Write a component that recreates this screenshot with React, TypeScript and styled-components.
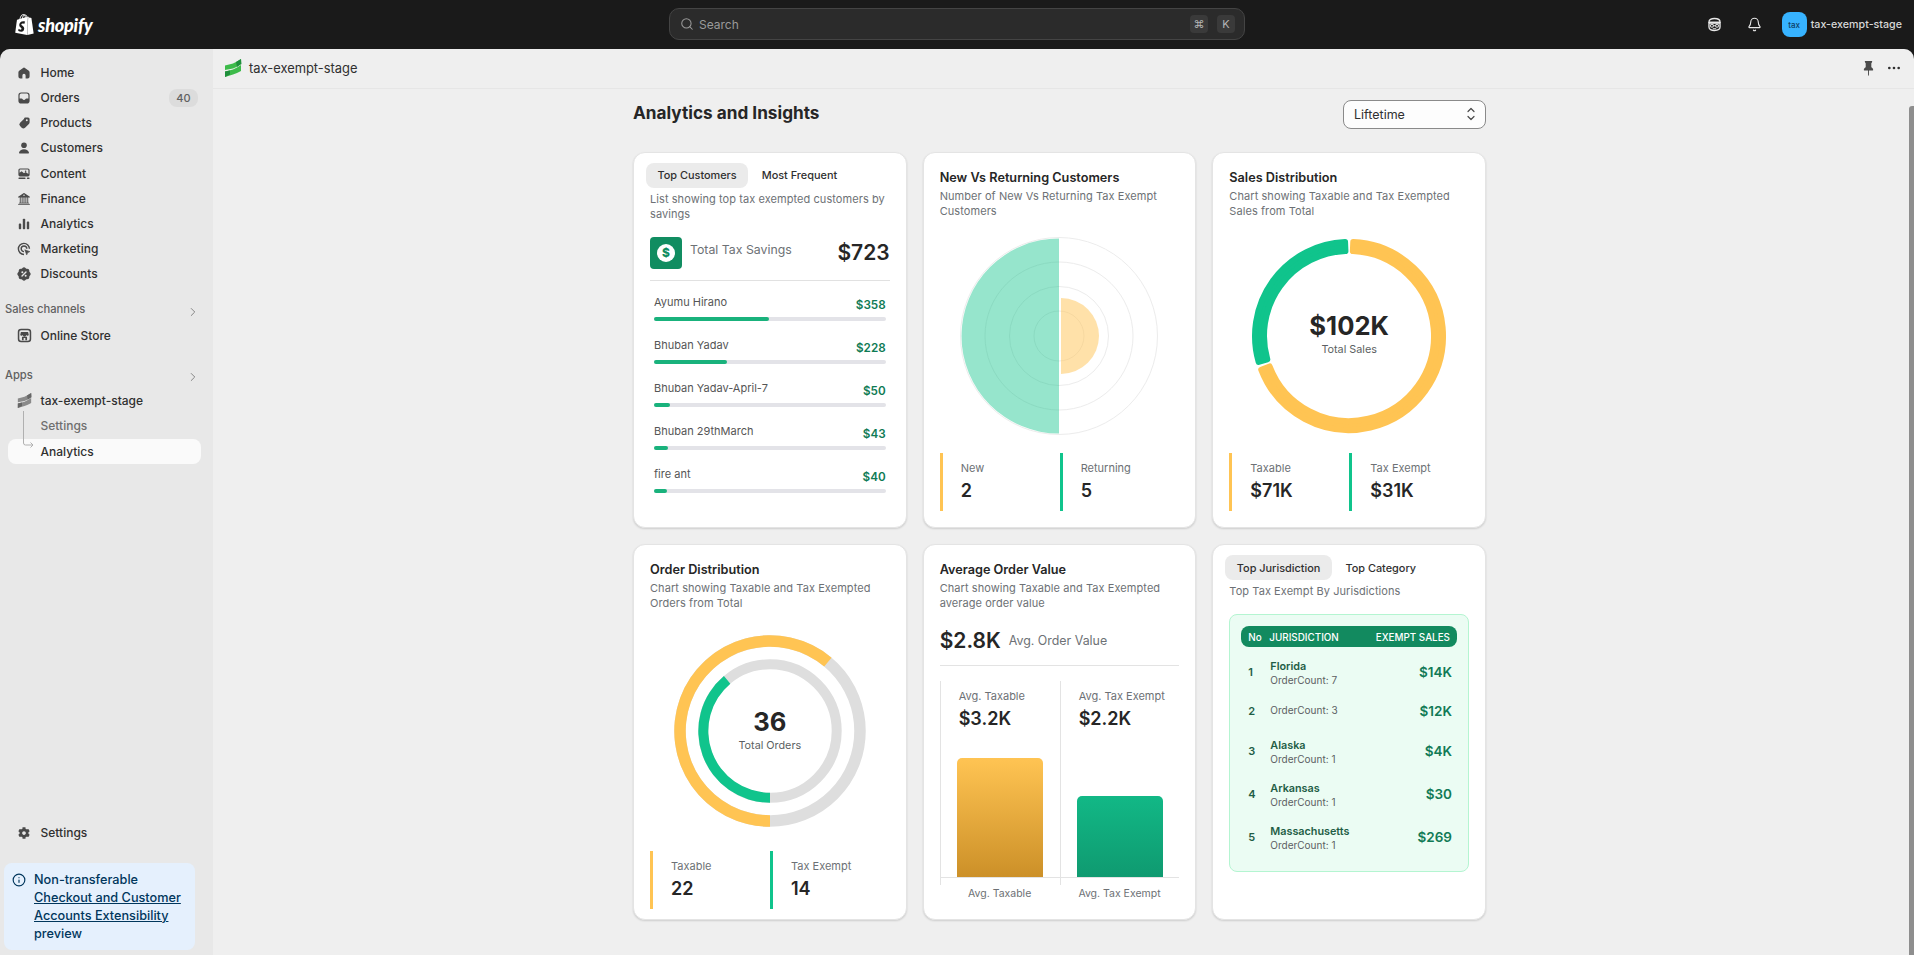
// App.tsx
import React from 'react';
import styled, { createGlobalStyle } from 'styled-components';
import { SiShopify } from 'react-icons/si';
import { FaCog } from 'react-icons/fa';
import { BsBank2, BsPinFill } from 'react-icons/bs';
import { TbRosetteDiscountFilled } from 'react-icons/tb';
import { Bell, ChevronRight, Ellipsis, Info, Search } from 'lucide-react';

const ORANGE = '#ffc453';
const GREEN = '#10c48c';

const polar = (cx: number, cy: number, r: number, deg: number) => {
  const rad = ((deg - 90) * Math.PI) / 180;
  return [cx + r * Math.cos(rad), cy + r * Math.sin(rad)].map(n => n.toFixed(2)).join(' ');
};

// annular sector, angles run clockwise from 12 o'clock
const sector = (cx: number, cy: number, inner: number, outer: number, a0: number, a1: number) => {
  const large = a1 - a0 > 180 ? 1 : 0;
  if (inner === 0) {
    return `M${polar(cx, cy, outer, a0)}A${outer} ${outer} 0 ${large} 1 ${polar(cx, cy, outer, a1)}Z`;
  }
  return `M${polar(cx, cy, outer, a0)}A${outer} ${outer} 0 ${large} 1 ${polar(cx, cy, outer, a1)}L${polar(cx, cy, inner, a1)}A${inner} ${inner} 0 ${large} 0 ${polar(cx, cy, inner, a0)}Z`;
};

const GlobalStyle = createGlobalStyle`
  html, body {
    margin: 0;
    height: 100%;
    overflow: hidden;
    background: #1a1a1a;
    font-family: Inter, "Liberation Sans", sans-serif;
  }
  * { box-sizing: border-box; }
`;

const Page = styled.div`
  width: 1914px;
  height: 955px;
  display: flex;
  flex-direction: column;
  background: #1a1a1a;
`;

const TopBar = styled.header`
  height: 49px;
  flex: none;
  position: relative;
  display: flex;
  align-items: center;
  justify-content: space-between;
  padding: 0 12px 0 14px;
  color: #e3e3e3;
`;

const Logo = styled.div`
  display: flex;
  align-items: center;
  gap: 3px;
  width: 398px;
  color: #fff;
`;

const LogoWord = styled.span`
  font-family: Lato, sans-serif;
  font-style: italic;
  font-weight: 900;
  font-size: 18px;
  letter-spacing: -0.2px;
`;

const SearchBox = styled.div`
  width: 576px;
  height: 32px;
  margin-top: -1px;
  display: flex;
  align-items: center;
  gap: 5px;
  padding: 0 9px 0 10px;
  background: #2b2b2b;
  border: 1px solid #444;
  border-radius: 10px;
  color: #9a9a9a;
  font-size: 12px;
`;

const SearchText = styled.span`
  flex: 1;
`;

const Kbd = styled.span`
  width: 18px;
  height: 18px;
  margin-left: 4px;
  display: flex;
  align-items: center;
  justify-content: center;
  background: #3a3a3a;
  border-radius: 4px;
  font-size: 11px;
  color: #b5b5b5;
`;

const TopRight = styled.div`
  width: 400px;
  display: flex;
  align-items: center;
  justify-content: flex-end;
`;

const TopIcon = styled.span`
  width: 20px;
  height: 20px;
  margin-right: 20px;
  display: flex;
  align-items: center;
  justify-content: center;
`;

const Avatar = styled.span`
  width: 25px;
  height: 25px;
  margin-left: -3px;
  border-radius: 8px;
  background: #37b3ff;
  color: #0b3d66;
  font-size: 8px;
  font-weight: 500;
  display: flex;
  align-items: center;
  justify-content: center;
`;

const ShopName = styled.span`
  margin-left: 4px;
  font-size: 10.7px;
  font-weight: 450;
  color: #d8d8d8;
`;

const Body = styled.div`
  flex: 1;
  display: flex;
  min-height: 0;
  border-radius: 10px 10px 0 0;
  overflow: hidden;
  box-shadow: inset 0 1px 0 rgba(255, 255, 255, 0.4);
`;

const Sidebar = styled.nav`
  width: 213px;
  flex: none;
  display: flex;
  flex-direction: column;
  padding: 11px 0 5px;
  background: #e8e8e8;
`;

const NavRow = styled.div<{ $active?: boolean; $muted?: boolean; $strong?: boolean; $top?: number }>`
  position: relative;
  height: 25px;
  flex: none;
  margin: ${p => p.$top ?? 0}px 12px 0 8px;
  padding: 0 3px 0 6px;
  display: flex;
  align-items: center;
  gap: 6.5px;
  border-radius: 8px;
  font-size: 12px;
  font-weight: ${p => (p.$active || p.$strong ? 550 : 500)};
  color: ${p => (p.$muted ? '#6f6f6f' : '#303030')};
  background: ${p => (p.$active ? '#fafafa' : 'transparent')};
`;

const NavIcon = styled.span`
  width: 20px;
  height: 20px;
  flex: none;
  display: flex;
  align-items: center;
  justify-content: center;
  color: #4a4a4a;
`;

const NavLabel = styled.span`
  flex: 1;
`;

const NavBadge = styled.span`
  width: 29px;
  height: 18px;
  display: flex;
  align-items: center;
  justify-content: center;
  border-radius: 8px;
  background: #dcdcdc;
  color: #616161;
  font-size: 11px;
`;

const SectionHead = styled.div<{ $top: number }>`
  height: 25px;
  flex: none;
  margin-top: ${p => p.$top}px;
  padding: 0 13px 0 5px;
  display: flex;
  align-items: center;
  justify-content: space-between;
  font-size: 11.2px;
  font-weight: 500;
  color: #616161;
`;

const SectionChevron = styled(ChevronRight)`
  margin-top: 5px;
  color: #777;
`;

const TreeLine = styled.svg`
  position: absolute;
  left: 14px;
  top: -28px;
  width: 14px;
  height: 42px;
`;

const Spacer = styled.div`
  flex: 1;
`;

const Banner = styled.div`
  margin: 18px 18px 0 4px;
  height: 87px;
  padding: 7.5px 6px 7.5px 8px;
  display: flex;
  gap: 8px;
  border-radius: 8px;
  background: #e5f0fd;
  color: #00365c;
  font-size: 12.7px;
  font-weight: 500;
  line-height: 18px;
`;

const BannerLink = styled.span`
  text-decoration: underline;
`;

const BannerIcon = styled.span`
  flex: none;
  height: 18px;
  width: 14px;
  display: flex;
  align-items: center;
`;

const Main = styled.main`
  flex: 1;
  position: relative;
  display: flex;
  flex-direction: column;
  background: #efefef;
`;

const AppBar = styled.div`
  height: 40px;
  flex: none;
  display: flex;
  align-items: center;
  gap: 8px;
  padding: 0 12px 1px 11px;
  border-bottom: 1px solid #e6e6e6;
  font-size: 12.9px;
  color: #303030;
`;

const AppBarTitle = styled.span`
  flex: 1;
  margin-left: -1px;
`;

const PinSlot = styled.span`
  width: 20px;
  height: 20px;
  display: flex;
  align-items: center;
  justify-content: center;
`;

const ScrollThumb = styled.div`
  position: absolute;
  right: 0;
  top: 57px;
  bottom: 0;
  width: 5px;
  border-radius: 3px 0 0 0;
  background: #8e8e8e;
`;

const Content = styled.div`
  width: 853px;
  margin-left: 420px;
  padding-top: 10px;
`;

const PageHead = styled.div`
  height: 30px;
  display: flex;
  align-items: center;
  justify-content: space-between;
`;

const PageTitle = styled.h1`
  margin: 0 0 4px;
  font-size: 17.2px;
  font-weight: 650;
  color: #262626;
`;

const SelectBox = styled.div`
  width: 143px;
  height: 29px;
  padding: 0 9px 0 10px;
  display: flex;
  align-items: center;
  justify-content: space-between;
  background: #fdfdfd;
  border: 1px solid #8a8a8a;
  border-radius: 8px;
  font-size: 12.5px;
  color: #303030;
`;

const CardGrid = styled.div`
  margin-top: 22.5px;
  display: grid;
  grid-template-columns: repeat(3, 1fr);
  grid-template-rows: 376.5px 376px;
  gap: 16px;
`;

const Card = styled.section<{ $tabbed?: boolean }>`
  display: flex;
  flex-direction: column;
  padding: ${p => (p.$tabbed ? '10px 16px' : '15px 16px')};
  background: #fff;
  border: 1px solid #e4e4e4;
  border-radius: 12px;
  box-shadow: 0 1px 2px rgba(0, 0, 0, 0.14);
`;

const CardTitle = styled.h2`
  margin: 0;
  font-size: 12.7px;
  line-height: 20px;
  font-weight: 600;
  color: #262626;
`;

const CardDesc = styled.p<{ $top?: number }>`
  margin: ${p => p.$top ?? 1}px 0 0;
  font-size: 11px;
  line-height: 15px;
  letter-spacing: 0.07px;
  color: #6d7175;
`;

const Tabs = styled.div`
  display: flex;
  gap: 2px;
  margin-left: -4px;
`;

const Tab = styled.span<{ $active?: boolean }>`
  height: 25px;
  padding: 0 11.5px;
  display: flex;
  align-items: center;
  border-radius: 8px;
  font-size: 10.9px;
  font-weight: 500;
  color: #303030;
  background: ${p => (p.$active ? '#ebebeb' : 'transparent')};
`;

const SavingsRow = styled.div`
  margin-top: 15px;
  display: flex;
  align-items: flex-start;
  padding-bottom: 11px;
  border-bottom: 1px solid #e1e1e1;
`;

const SavingsIcon = styled.span`
  width: 32px;
  height: 32px;
  flex: none;
  display: flex;
  align-items: center;
  justify-content: center;
  border-radius: 4px;
  background: #118d61;
`;

const SavingsCoin = styled.span`
  width: 18px;
  height: 18px;
  display: flex;
  align-items: center;
  justify-content: center;
  border-radius: 50%;
  background: #fff;
  color: #118d61;
  font-size: 12px;
  font-weight: 800;
`;

const SavingsLabel = styled.span`
  flex: 1;
  margin: 5px 0 0 8px;
  font-size: 12.3px;
  color: #6d7175;
`;

const SavingsValue = styled.span`
  font-size: 21px;
  line-height: 32px;
  font-weight: 600;
  color: #262626;
`;

const SaverList = styled.div`
  margin: 13px 4px 0;
  display: flex;
  flex-direction: column;
  gap: 16px;
`;

const SaverHead = styled.div`
  height: 23px;
  display: flex;
  justify-content: space-between;
`;

const SaverName = styled.span`
  font-size: 11px;
  line-height: 16px;
  color: #555;
`;

const SaverAmount = styled.span`
  margin-top: 3px;
  font-size: 11.7px;
  line-height: 16px;
  font-weight: 600;
  color: #0f7b55;
`;

const Track = styled.div`
  height: 4px;
  border-radius: 2px;
  background: #e3e3e8;
`;

const Fill = styled.div<{ $pct: number }>`
  height: 100%;
  width: ${p => p.$pct}%;
  border-radius: 2px;
  background: #19b27c;
`;

const ChartWrap = styled.div<{ $top: number; $bottom: number }>`
  position: relative;
  height: 200px;
  margin: ${p => p.$top}px 0 ${p => p.$bottom}px;
  display: flex;
  justify-content: center;
`;

const ChartCentre = styled.div`
  position: absolute;
  inset: 0;
  padding-bottom: 6px;
  display: flex;
  flex-direction: column;
  align-items: center;
  justify-content: center;
`;

const CentreValue = styled.span`
  font-size: 25.6px;
  line-height: 33px;
  font-weight: 650;
  color: #262626;
`;

const CentreLabel = styled.span`
  margin-top: 1px;
  font-size: 10.8px;
  line-height: 13px;
  color: #5c5f62;
`;

const Legend = styled.div`
  display: grid;
  grid-template-columns: 120px 1fr;
`;

const LegendItem = styled.div<{ $color: string }>`
  height: 58px;
  padding: 8px 0 0 18px;
  border-left: 3px solid ${p => p.$color};
`;

const StatLabel = styled.div`
  font-size: 11px;
  line-height: 15px;
  color: #6d7175;
`;

const StatValue = styled.div`
  margin-top: 3px;
  font-size: 18px;
  line-height: 24px;
  font-weight: 600;
  color: #262626;
`;

const AvgSummary = styled.div`
  margin-top: 14px;
  height: 41px;
  display: flex;
  align-items: center;
  gap: 8px;
  border-bottom: 1px solid #e3e3e3;
  padding-bottom: 10px;
`;

const AvgValue = styled.span`
  font-size: 21px;
  font-weight: 600;
  color: #262626;
`;

const AvgLabel = styled.span`
  font-size: 12.4px;
  color: #6d7175;
`;

const AvgGrid = styled.div`
  margin-top: 15px;
  display: grid;
  grid-template-columns: 120px 1fr;
`;

const AvgStat = styled.div`
  height: 68px;
  padding: 8px 0 0 18px;
  border-left: 1px solid #e3e3e3;
`;

const BarPlot = styled.div`
  height: 129px;
  display: flex;
  align-items: flex-end;
  justify-content: center;
  border-left: 1px solid #e3e3e3;
  border-bottom: 1px solid #e3e3e3;
`;

const Bar = styled.div<{ $h: number; $from: string; $to: string }>`
  width: 86px;
  height: ${p => p.$h}px;
  border-radius: 5px 5px 0 0;
  background: linear-gradient(${p => p.$from}, ${p => p.$to});
`;

const Tick = styled.div`
  height: 7px;
  border-left: 1px solid #e3e3e3;
`;

const BarLabel = styled.div`
  margin-top: 1px;
  text-align: center;
  font-size: 10.5px;
  line-height: 16px;
  color: #6d7175;
`;

const TableBox = styled.div`
  margin-top: 15px;
  height: 258px;
  padding: 11px 11px 0;
  border: 1px solid #b4f5d1;
  border-radius: 8px;
  background: #ebfcf3;
`;

const TableHead = styled.div`
  height: 21px;
  padding: 0 7px 0 7px;
  display: flex;
  align-items: center;
  border-radius: 8px;
  background: #128a5f;
  color: #fff;
  font-size: 9.85px;
  font-weight: 500;
`;

const HeadNo = styled.span`
  width: 21px;
`;

const HeadName = styled.span`
  flex: 1;
`;

const TableRows = styled.div`
  margin-top: 3px;
`;

const TableRow = styled.div<{ $short?: boolean }>`
  height: ${p => (p.$short ? 36 : 43)}px;
  padding: 0 5px 0 7px;
  display: flex;
  align-items: center;
`;

const RowNo = styled.span`
  width: 22px;
  font-size: 11px;
  font-weight: 600;
  color: #1f5e46;
`;

const RowInfo = styled.div<{ $short?: boolean }>`
  flex: 1;
  padding-top: 4px;
  margin-top: ${p => (p.$short ? -6 : 0)}px;
`;

const RowName = styled.div`
  font-size: 10.8px;
  line-height: 14px;
  font-weight: 600;
  color: #1f5e46;
`;

const RowCount = styled.div`
  font-size: 10px;
  line-height: 13px;
  color: #5c5f62;
`;

const RowAmount = styled.span`
  font-size: 13.5px;
  font-weight: 600;
  color: #117a56;
`;

const AppMark: React.FC<{ gray?: boolean; size?: number }> = ({ gray, size = 18 }) => {
  const light = gray ? '#8a8a8a' : '#3dbb4a';
  const dark = gray ? '#666' : '#1f8f3c';
  return (
    <svg width={size} height={size} viewBox="0 0 18 18">
      <path d="M1 6.500 9 4.500 13 2.500 17 0 17 4 12.500 8 9 9.500 1 11z" fill={light} />
      <path d="M12 3 17 0 17.500 5 13 8z" fill={dark} />
      <path d="M1 12.500 9 10.500 13 8.500 17 6 17 12 13 14 9 15.500 1 18z" fill={light} />
      <path d="M1 12.500 6 11.500 6 15.500 1 18z" fill={dark} />
    </svg>
  );
};

const HomeIcon = () => (
  <svg width="16" height="16" viewBox="0 0 20 20" fill="currentColor">
    <path d="M10.700 3.300a1.200 1.200 0 0 0-1.400 0L4 7.300A2.500 2.500 0 0 0 3 9.300V14.500A2.500 2.500 0 0 0 5.500 17H7.500a.5.5 0 0 0 .5-.5V13a2 2 0 0 1 4 0v3.500a.5.5 0 0 0 .5.5h2A2.500 2.500 0 0 0 17 14.500V9.300a2.500 2.500 0 0 0-1-2z" />
  </svg>
);

const OrdersIcon = () => (
  <svg width="16" height="16" viewBox="0 0 20 20" fill="currentColor">
    <path
      fillRule="evenodd"
      d="M6.500 3h7A3.500 3.500 0 0 1 17 6.500v7a3.500 3.500 0 0 1-3.500 3.500h-7A3.500 3.500 0 0 1 3 13.500v-7A3.500 3.500 0 0 1 6.500 3zM6.500 4.500a2 2 0 0 0-2 2v4h2.300c.8 0 1.200.5 1.500 1 .3.600.9 1 1.700 1s1.400-.4 1.700-1c.3-.5.7-1 1.500-1h2.300v-4a2 2 0 0 0-2-2z"
    />
  </svg>
);

const TagIcon = () => (
  <svg width="16" height="16" viewBox="0 0 20 20" fill="currentColor">
    <path
      fillRule="evenodd"
      d="M11 3h4a2 2 0 0 1 2 2v4a3 3 0 0 1-.9 2.100l-4.800 4.800a3 3 0 0 1-4.200 0l-2-2a3 3 0 0 1 0-4.200l4.800-4.800A3 3 0 0 1 11 3zM13.500 5.300a1.200 1.200 0 1 0 0 2.400 1.200 1.200 0 0 0 0-2.400z"
    />
  </svg>
);

const PersonIcon = () => (
  <svg width="16" height="16" viewBox="0 0 20 20" fill="currentColor">
    <circle cx="10" cy="6.500" r="3.500" />
    <path d="M10 11.500c-3.400 0-5.600 1.700-6.200 4.200-.2.700.4 1.300 1.100 1.300h10.200c.7 0 1.300-.6 1.100-1.300-.6-2.500-2.800-4.200-6.200-4.200z" />
  </svg>
);

const ContentIcon = () => (
  <svg width="16" height="16" viewBox="0 0 20 20" fill="currentColor">
    <path
      fillRule="evenodd"
      d="M5 3h10a2 2 0 0 1 2 2v6a2 2 0 0 1-2 2H5a2 2 0 0 1-2-2V5a2 2 0 0 1 2-2zM5 4.500a.5.5 0 0 0-.5.5v3.500l2.500-2 3 2.500 2-1.500 3.500 2.500V5a.5.5 0 0 0-.5-.5zM12 5.500a1 1 0 1 0 0 2 1 1 0 0 0 0-2z"
    />
    <rect x="3" y="14.500" width="9" height="1.800" rx=".9" />
    <rect x="13.500" y="14.500" width="3.500" height="1.800" rx=".9" />
  </svg>
);

const BarsIcon = () => (
  <svg width="16" height="16" viewBox="0 0 20 20" fill="currentColor">
    <rect x="3.500" y="9.500" width="3" height="7" rx="1" />
    <rect x="8.500" y="3.500" width="3" height="13" rx="1" />
    <rect x="13.500" y="7" width="3" height="9.500" rx="1" />
  </svg>
);

const TargetIcon = () => (
  <svg width="16" height="16" viewBox="0 0 20 20" fill="none" stroke="currentColor" strokeWidth="1.800">
    <path d="M16.800 9.800a6.900 6.900 0 1 0-6.800 7" />
    <path d="M13.500 9.800a3.500 3.500 0 1 0-3.500 3.500" />
    <path d="M11 11l6.300 2.300-2.700 1.200-1.200 2.800z" fill="currentColor" strokeWidth=".8" />
  </svg>
);

const StoreIcon = () => (
  <svg width="17" height="17" viewBox="0 0 20 20" fill="none">
    <rect x="3" y="3" width="14" height="14" rx="3" stroke="currentColor" strokeWidth="1.800" />
    <path d="M5.800 6h8.400l.8 3a1.600 1.600 0 0 1-3 .5 1.800 1.800 0 0 1-4 0 1.600 1.600 0 0 1-3-.5z" fill="currentColor" />
    <path d="M7 11.500v4h2V13h2v2.500h2v-4z" fill="currentColor" />
  </svg>
);

const SpyIcon = () => (
  <svg width="17" height="17" viewBox="0 0 20 20" fill="none" stroke="#e8e8e8" strokeWidth="1.600">
    <path d="M3.500 8V7c0-2.500 2.500-4 6.500-4s6.500 1.500 6.500 4v1" />
    <path d="M3.500 8h13v5c0 2.500-2.500 4-6.500 4s-6.500-1.500-6.500-4z" />
    <path d="M3.500 6.500h13V9h-13z" fill="#e8e8e8" stroke="none" />
    <circle cx="7" cy="11.500" r="1.700" strokeWidth="1.200" />
    <circle cx="13" cy="11.500" r="1.700" strokeWidth="1.200" />
    <path d="M8.700 11.500h2.600M8 15h4" strokeWidth="1.200" />
  </svg>
);

const navItems: { label: string; icon: React.ReactNode; badge?: string; top?: number }[] = [
  { label: 'Home', icon: <HomeIcon /> },
  { label: 'Orders', icon: <OrdersIcon />, badge: '40' },
  { label: 'Products', icon: <TagIcon /> },
  { label: 'Customers', icon: <PersonIcon /> },
  { label: 'Content', icon: <ContentIcon />, top: 1 },
  { label: 'Finance', icon: <BsBank2 size={12} /> },
  { label: 'Analytics', icon: <BarsIcon /> },
  { label: 'Marketing', icon: <TargetIcon /> },
  { label: 'Discounts', icon: <TbRosetteDiscountFilled size={16} /> },
];

const savers = [
  { name: 'Ayumu Hirano', amount: '$358', pct: 49.6 },
  { name: 'Bhuban Yadav', amount: '$228', pct: 31.4 },
  { name: 'Bhuban Yadav-April-7', amount: '$50', pct: 6.9 },
  { name: 'Bhuban 29thMarch', amount: '$43', pct: 6 },
  { name: 'fire ant', amount: '$40', pct: 5.6 },
];

const jurisdictions = [
  { no: 1, name: 'Florida', count: 7, amount: '$14K' },
  { no: 2, name: '', count: 3, amount: '$12K' },
  { no: 3, name: 'Alaska', count: 1, amount: '$4K' },
  { no: 4, name: 'Arkansas', count: 1, amount: '$30' },
  { no: 5, name: 'Massachusetts', count: 1, amount: '$269' },
];

const App: React.FC = () => (
  <Page>
    <GlobalStyle />
    <TopBar>
      <Logo>
        <SiShopify size={21} />
        <LogoWord>shopify</LogoWord>
      </Logo>
      <SearchBox>
        <Search size={14} strokeWidth={1.800} />
        <SearchText>Search</SearchText>
        <Kbd>⌘</Kbd>
        <Kbd>K</Kbd>
      </SearchBox>
      <TopRight>
        <TopIcon>
          <SpyIcon />
        </TopIcon>
        <TopIcon>
          <Bell size={15} strokeWidth={1.800} color="#e8e8e8" />
        </TopIcon>
        <Avatar>tax</Avatar>
        <ShopName>tax-exempt-stage</ShopName>
      </TopRight>
    </TopBar>
    <Body>
      <Sidebar>
        {navItems.map(item => (
          <NavRow key={item.label} $top={item.top}>
            <NavIcon>{item.icon}</NavIcon>
            <NavLabel>{item.label}</NavLabel>
            {item.badge && <NavBadge>{item.badge}</NavBadge>}
          </NavRow>
        ))}
        <SectionHead $top={10.500}>
          Sales channels
          <SectionChevron size={14} strokeWidth={1.500} />
        </SectionHead>
        <NavRow $top={1.500}>
          <NavIcon>
            <StoreIcon />
          </NavIcon>
          <NavLabel>Online Store</NavLabel>
        </NavRow>
        <SectionHead $top={14}>
          Apps
          <SectionChevron size={14} strokeWidth={1.500} />
        </SectionHead>
        <NavRow $strong $top={1}>
          <NavIcon>
            <AppMark gray size={15} />
          </NavIcon>
          <NavLabel>tax-exempt-stage</NavLabel>
        </NavRow>
        <NavRow $muted>
          <NavIcon />
          <NavLabel>Settings</NavLabel>
        </NavRow>
        <NavRow $active $top={1}>
          <TreeLine viewBox="0 0 14 42" fill="none" stroke="#b0b0b0" strokeWidth="1">
            <path d="M1.500 0V32a2 2 0 0 0 2 2H11M8.500 31.500 11 34l-2.500 2.500" />
          </TreeLine>
          <NavIcon />
          <NavLabel>Analytics</NavLabel>
        </NavRow>
        <Spacer />
        <NavRow>
          <NavIcon>
            <FaCog size={12} />
          </NavIcon>
          <NavLabel>Settings</NavLabel>
        </NavRow>
        <Banner>
          <BannerIcon>
            <Info size={14} strokeWidth={2} />
          </BannerIcon>
          <div>
            Non-transferable <BannerLink>Checkout and Customer Accounts Extensibility</BannerLink> preview
          </div>
        </Banner>
      </Sidebar>
      <Main>
        <AppBar>
          <AppMark />
          <AppBarTitle>tax-exempt-stage</AppBarTitle>
          <PinSlot>
            <BsPinFill size={15} color="#4a4a4a" />
          </PinSlot>
          <Ellipsis size={16} color="#303030" />
        </AppBar>
        <ScrollThumb />
        <Content>
          <PageHead>
            <PageTitle>Analytics and Insights</PageTitle>
            <SelectBox>
              Liftetime
              <svg width="10" height="14" viewBox="0 0 10 14" fill="none" stroke="#4a4a4a" strokeWidth="1.200" strokeLinecap="round" strokeLinejoin="round">
                <path d="M2 4.500 5 1.500 8 4.500M2 9.500 5 12.500 8 9.500" />
              </svg>
            </SelectBox>
          </PageHead>
          <CardGrid>
            <Card $tabbed>
              <Tabs>
                <Tab $active>Top Customers</Tab>
                <Tab>Most Frequent</Tab>
              </Tabs>
              <CardDesc $top={4}>List showing top tax exempted customers by savings</CardDesc>
              <SavingsRow>
                <SavingsIcon>
                  <SavingsCoin>$</SavingsCoin>
                </SavingsIcon>
                <SavingsLabel>Total Tax Savings</SavingsLabel>
                <SavingsValue>$723</SavingsValue>
              </SavingsRow>
              <SaverList>
                {savers.map(s => (
                  <div key={s.name}>
                    <SaverHead>
                      <SaverName>{s.name}</SaverName>
                      <SaverAmount>{s.amount}</SaverAmount>
                    </SaverHead>
                    <Track>
                      <Fill $pct={s.pct} />
                    </Track>
                  </div>
                ))}
              </SaverList>
            </Card>

            <Card>
              <CardTitle>New Vs Returning Customers</CardTitle>
              <CardDesc>Number of New Vs Returning Tax Exempt Customers</CardDesc>
              <ChartWrap $top={17} $bottom={17}>
                <svg width="200" height="200" viewBox="0 0 200 200">
                  {[98.500, 74, 49.500, 25].map(r => (
                    <circle key={r} cx="100" cy="100" r={r} fill="none" stroke="#ececec" strokeWidth="1" />
                  ))}
                  <path d={sector(100, 100, 0, 97.500, 180, 360)} fill={GREEN} fillOpacity=".44" />
                  <path d={sector(102, 100, 0, 38, 0, 180)} fill={ORANGE} fillOpacity=".5" />
                </svg>
              </ChartWrap>
              <Legend>
                <LegendItem $color={ORANGE}>
                  <StatLabel>New</StatLabel>
                  <StatValue>2</StatValue>
                </LegendItem>
                <LegendItem $color={GREEN}>
                  <StatLabel>Returning</StatLabel>
                  <StatValue>5</StatValue>
                </LegendItem>
              </Legend>
            </Card>

            <Card>
              <CardTitle>Sales Distribution</CardTitle>
              <CardDesc>Chart showing Taxable and Tax Exempted Sales from Total</CardDesc>
              <ChartWrap $top={17} $bottom={17}>
                <svg width="200" height="200" viewBox="0 0 200 200">
                  <path d={sector(100, 100, 85, 94, 2.600, 249)} fill={ORANGE} stroke={ORANGE} strokeWidth="6" strokeLinejoin="round" />
                  <path d={sector(100, 100, 85, 94, 254, 357.600)} fill={GREEN} stroke={GREEN} strokeWidth="6" strokeLinejoin="round" />
                </svg>
                <ChartCentre>
                  <CentreValue>$102K</CentreValue>
                  <CentreLabel>Total Sales</CentreLabel>
                </ChartCentre>
              </ChartWrap>
              <Legend>
                <LegendItem $color={ORANGE}>
                  <StatLabel>Taxable</StatLabel>
                  <StatValue>$71K</StatValue>
                </LegendItem>
                <LegendItem $color={GREEN}>
                  <StatLabel>Tax Exempt</StatLabel>
                  <StatValue>$31K</StatValue>
                </LegendItem>
              </Legend>
            </Card>

            <Card>
              <CardTitle>Order Distribution</CardTitle>
              <CardDesc>Chart showing Taxable and Tax Exempted Orders from Total</CardDesc>
              <ChartWrap $top={20} $bottom={20}>
                <svg width="200" height="200" viewBox="0 0 200 200">
                  <circle cx="100" cy="100" r="90" fill="none" stroke="#dedede" strokeWidth="11.500" />
                  <circle cx="100" cy="100" r="66.700" fill="none" stroke="#dedede" strokeWidth="10" />
                  <path d={sector(100, 100, 84.250, 95.750, 180, 400)} fill={ORANGE} />
                  <path d={sector(100, 100, 61.700, 71.700, 180, 320)} fill={GREEN} />
                </svg>
                <ChartCentre>
                  <CentreValue>36</CentreValue>
                  <CentreLabel>Total Orders</CentreLabel>
                </ChartCentre>
              </ChartWrap>
              <Legend>
                <LegendItem $color={ORANGE}>
                  <StatLabel>Taxable</StatLabel>
                  <StatValue>22</StatValue>
                </LegendItem>
                <LegendItem $color={GREEN}>
                  <StatLabel>Tax Exempt</StatLabel>
                  <StatValue>14</StatValue>
                </LegendItem>
              </Legend>
            </Card>

            <Card>
              <CardTitle>Average Order Value</CardTitle>
              <CardDesc>Chart showing Taxable and Tax Exempted average order value</CardDesc>
              <AvgSummary>
                <AvgValue>$2.8K</AvgValue>
                <AvgLabel>Avg. Order Value</AvgLabel>
              </AvgSummary>
              <AvgGrid>
                <div>
                  <AvgStat>
                    <StatLabel>Avg. Taxable</StatLabel>
                    <StatValue>$3.2K</StatValue>
                  </AvgStat>
                  <BarPlot>
                    <Bar $h={119} $from="#ffc453" $to="#cc9028" />
                  </BarPlot>
                  <Tick />
                  <BarLabel>Avg. Taxable</BarLabel>
                </div>
                <div>
                  <AvgStat>
                    <StatLabel>Avg. Tax Exempt</StatLabel>
                    <StatValue>$2.2K</StatValue>
                  </AvgStat>
                  <BarPlot>
                    <Bar $h={81} $from="#12b886" $to="#0f9a70" />
                  </BarPlot>
                  <Tick />
                  <BarLabel>Avg. Tax Exempt</BarLabel>
                </div>
              </AvgGrid>
            </Card>

            <Card $tabbed>
              <Tabs>
                <Tab $active>Top Jurisdiction</Tab>
                <Tab>Top Category</Tab>
              </Tabs>
              <CardDesc $top={4}>Top Tax Exempt By Jurisdictions</CardDesc>
              <TableBox>
                <TableHead>
                  <HeadNo>No</HeadNo>
                  <HeadName>JURISDICTION</HeadName>
                  <span>EXEMPT SALES</span>
                </TableHead>
                <TableRows>
                  {jurisdictions.map(j => (
                    <TableRow key={j.no} $short={!j.name}>
                      <RowNo>{j.no}</RowNo>
                      <RowInfo $short={!j.name}>
                        {j.name && <RowName>{j.name}</RowName>}
                        <RowCount>OrderCount: {j.count}</RowCount>
                      </RowInfo>
                      <RowAmount>{j.amount}</RowAmount>
                    </TableRow>
                  ))}
                </TableRows>
              </TableBox>
            </Card>
          </CardGrid>
        </Content>
      </Main>
    </Body>
  </Page>
);

export default App;
